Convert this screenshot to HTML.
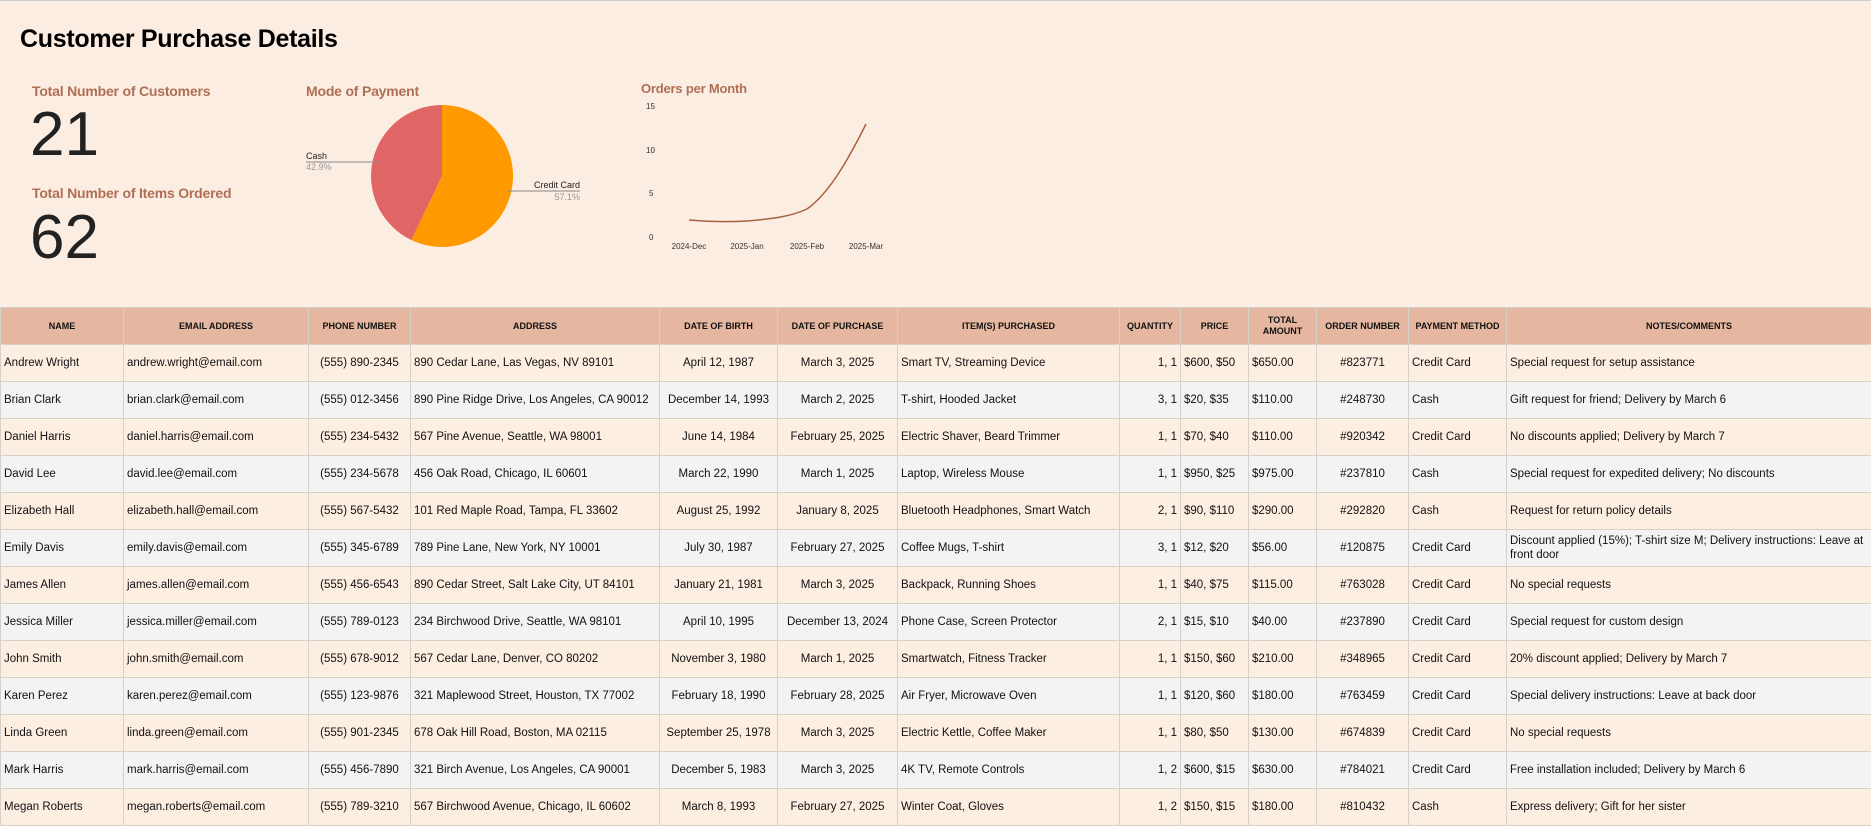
<!DOCTYPE html>
<html><head><meta charset="utf-8"><style>
*{margin:0;padding:0;box-sizing:border-box}
body{width:1871px;height:823px;overflow:hidden;background:#fcede2;font-family:"Liberation Sans",Arial,sans-serif;position:relative;border-top:1px solid #ccc}
.abs{position:absolute}
.t{font-size:25px;font-weight:bold;color:#000;left:20px;top:24px;letter-spacing:-0.3px}
.lbl{font-size:14px;font-weight:bold;color:#b06f55;letter-spacing:-0.2px}
.big{font-size:62px;color:#222;line-height:1}
table{position:absolute;left:0;top:306px;border-collapse:collapse;table-layout:fixed;width:1871px;font-size:11.5px;color:#111}
th,td{height:37px;border:1px solid #d4d0cc;padding:0 3px;white-space:nowrap;overflow:hidden}
th{background:#e5b7a0;font-size:9px;font-weight:bold;text-align:center;line-height:11px}
tr:nth-child(even) td{background:#fdeee2}
tr:nth-child(odd) td{background:#f3f3f3}
td.c{text-align:center}td.r{text-align:right}
td.w{white-space:normal;line-height:14px}
</style></head><body>
<div class="abs t">Customer Purchase Details</div>
<div class="abs lbl" style="left:32px;top:82px">Total Number of Customers</div>
<div class="abs big" style="left:30px;top:103px">21</div>
<div class="abs lbl" style="left:32px;top:184px">Total Number of Items Ordered</div>
<div class="abs big" style="left:30px;top:206px">62</div>
<div class="abs lbl" style="left:306px;top:82px">Mode of Payment</div>
<div class="abs lbl" style="left:641px;top:80px;font-size:13px">Orders per Month</div>
<svg class="abs" style="left:0;top:0" width="1871" height="300" font-family="Liberation Sans,Arial,sans-serif">
<path d="M442 175 L442 104 A71 71 0 1 1 411.3 239 Z" fill="#ff9900"/>
<path d="M442 175 L411.3 239 A71 71 0 0 1 442 104 Z" fill="#e06666"/>
<line x1="306" y1="161" x2="379" y2="161" stroke="#888" stroke-width="1"/>
<text x="306" y="158" font-size="9" fill="#222">Cash</text>
<text x="306" y="169" font-size="9" fill="#999">42.9%</text>
<line x1="508" y1="190" x2="580" y2="190" stroke="#888" stroke-width="1"/>
<text x="580" y="187" font-size="9" fill="#222" text-anchor="end">Credit Card</text>
<text x="580" y="199" font-size="9" fill="#999" text-anchor="end">57.1%</text>
<g font-size="8" fill="#333">
<text x="646" y="108">15</text><text x="646" y="152">10</text><text x="649" y="195">5</text><text x="649" y="239">0</text>
<g text-anchor="middle"><text x="689" y="248">2024-Dec</text><text x="747" y="248">2025-Jan</text><text x="807" y="248">2025-Feb</text><text x="866" y="248">2025-Mar</text></g>
</g>
<path d="M689 219 C710 221 730 221 747 220 C770 218 790 216 807 208 C830 192 850 155 866 123" fill="none" stroke="#a8603f" stroke-width="1.5"/>
</svg>
<table>
<colgroup><col style="width:123px"><col style="width:185px"><col style="width:102px"><col style="width:249px"><col style="width:118px"><col style="width:120px"><col style="width:222px"><col style="width:61px"><col style="width:68px"><col style="width:68px"><col style="width:92px"><col style="width:98px"><col style="width:365px"></colgroup>
<tr><th>NAME</th><th>EMAIL ADDRESS</th><th>PHONE NUMBER</th><th>ADDRESS</th><th>DATE OF BIRTH</th><th>DATE OF PURCHASE</th><th>ITEM(S) PURCHASED</th><th>QUANTITY</th><th>PRICE</th><th>TOTAL<br>AMOUNT</th><th>ORDER NUMBER</th><th>PAYMENT METHOD</th><th>NOTES/COMMENTS</th></tr>
<tr><td>Andrew Wright</td><td>andrew.wright@email.com</td><td class="c">(555) 890-2345</td><td>890 Cedar Lane, Las Vegas, NV 89101</td><td class="c">April 12, 1987</td><td class="c">March 3, 2025</td><td>Smart TV, Streaming Device</td><td class="r">1, 1</td><td>$600, $50</td><td>$650.00</td><td class="c">#823771</td><td>Credit Card</td><td>Special request for setup assistance</td></tr>
<tr><td>Brian Clark</td><td>brian.clark@email.com</td><td class="c">(555) 012-3456</td><td>890 Pine Ridge Drive, Los Angeles, CA 90012</td><td class="c">December 14, 1993</td><td class="c">March 2, 2025</td><td>T-shirt, Hooded Jacket</td><td class="r">3, 1</td><td>$20, $35</td><td>$110.00</td><td class="c">#248730</td><td>Cash</td><td>Gift request for friend; Delivery by March 6</td></tr>
<tr><td>Daniel Harris</td><td>daniel.harris@email.com</td><td class="c">(555) 234-5432</td><td>567 Pine Avenue, Seattle, WA 98001</td><td class="c">June 14, 1984</td><td class="c">February 25, 2025</td><td>Electric Shaver, Beard Trimmer</td><td class="r">1, 1</td><td>$70, $40</td><td>$110.00</td><td class="c">#920342</td><td>Credit Card</td><td>No discounts applied; Delivery by March 7</td></tr>
<tr><td>David Lee</td><td>david.lee@email.com</td><td class="c">(555) 234-5678</td><td>456 Oak Road, Chicago, IL 60601</td><td class="c">March 22, 1990</td><td class="c">March 1, 2025</td><td>Laptop, Wireless Mouse</td><td class="r">1, 1</td><td>$950, $25</td><td>$975.00</td><td class="c">#237810</td><td>Cash</td><td>Special request for expedited delivery; No discounts</td></tr>
<tr><td>Elizabeth Hall</td><td>elizabeth.hall@email.com</td><td class="c">(555) 567-5432</td><td>101 Red Maple Road, Tampa, FL 33602</td><td class="c">August 25, 1992</td><td class="c">January 8, 2025</td><td>Bluetooth Headphones, Smart Watch</td><td class="r">2, 1</td><td>$90, $110</td><td>$290.00</td><td class="c">#292820</td><td>Cash</td><td>Request for return policy details</td></tr>
<tr><td>Emily Davis</td><td>emily.davis@email.com</td><td class="c">(555) 345-6789</td><td>789 Pine Lane, New York, NY 10001</td><td class="c">July 30, 1987</td><td class="c">February 27, 2025</td><td>Coffee Mugs, T-shirt</td><td class="r">3, 1</td><td>$12, $20</td><td>$56.00</td><td class="c">#120875</td><td>Credit Card</td><td class="w">Discount applied (15%); T-shirt size M; Delivery instructions: Leave at front door</td></tr>
<tr><td>James Allen</td><td>james.allen@email.com</td><td class="c">(555) 456-6543</td><td>890 Cedar Street, Salt Lake City, UT 84101</td><td class="c">January 21, 1981</td><td class="c">March 3, 2025</td><td>Backpack, Running Shoes</td><td class="r">1, 1</td><td>$40, $75</td><td>$115.00</td><td class="c">#763028</td><td>Credit Card</td><td>No special requests</td></tr>
<tr><td>Jessica Miller</td><td>jessica.miller@email.com</td><td class="c">(555) 789-0123</td><td>234 Birchwood Drive, Seattle, WA 98101</td><td class="c">April 10, 1995</td><td class="c">December 13, 2024</td><td>Phone Case, Screen Protector</td><td class="r">2, 1</td><td>$15, $10</td><td>$40.00</td><td class="c">#237890</td><td>Credit Card</td><td>Special request for custom design</td></tr>
<tr><td>John Smith</td><td>john.smith@email.com</td><td class="c">(555) 678-9012</td><td>567 Cedar Lane, Denver, CO 80202</td><td class="c">November 3, 1980</td><td class="c">March 1, 2025</td><td>Smartwatch, Fitness Tracker</td><td class="r">1, 1</td><td>$150, $60</td><td>$210.00</td><td class="c">#348965</td><td>Credit Card</td><td>20% discount applied; Delivery by March 7</td></tr>
<tr><td>Karen Perez</td><td>karen.perez@email.com</td><td class="c">(555) 123-9876</td><td>321 Maplewood Street, Houston, TX 77002</td><td class="c">February 18, 1990</td><td class="c">February 28, 2025</td><td>Air Fryer, Microwave Oven</td><td class="r">1, 1</td><td>$120, $60</td><td>$180.00</td><td class="c">#763459</td><td>Credit Card</td><td>Special delivery instructions: Leave at back door</td></tr>
<tr><td>Linda Green</td><td>linda.green@email.com</td><td class="c">(555) 901-2345</td><td>678 Oak Hill Road, Boston, MA 02115</td><td class="c">September 25, 1978</td><td class="c">March 3, 2025</td><td>Electric Kettle, Coffee Maker</td><td class="r">1, 1</td><td>$80, $50</td><td>$130.00</td><td class="c">#674839</td><td>Credit Card</td><td>No special requests</td></tr>
<tr><td>Mark Harris</td><td>mark.harris@email.com</td><td class="c">(555) 456-7890</td><td>321 Birch Avenue, Los Angeles, CA 90001</td><td class="c">December 5, 1983</td><td class="c">March 3, 2025</td><td>4K TV, Remote Controls</td><td class="r">1, 2</td><td>$600, $15</td><td>$630.00</td><td class="c">#784021</td><td>Credit Card</td><td>Free installation included; Delivery by March 6</td></tr>
<tr><td>Megan Roberts</td><td>megan.roberts@email.com</td><td class="c">(555) 789-3210</td><td>567 Birchwood Avenue, Chicago, IL 60602</td><td class="c">March 8, 1993</td><td class="c">February 27, 2025</td><td>Winter Coat, Gloves</td><td class="r">1, 2</td><td>$150, $15</td><td>$180.00</td><td class="c">#810432</td><td>Cash</td><td>Express delivery; Gift for her sister</td></tr>
</table>
</body></html>
